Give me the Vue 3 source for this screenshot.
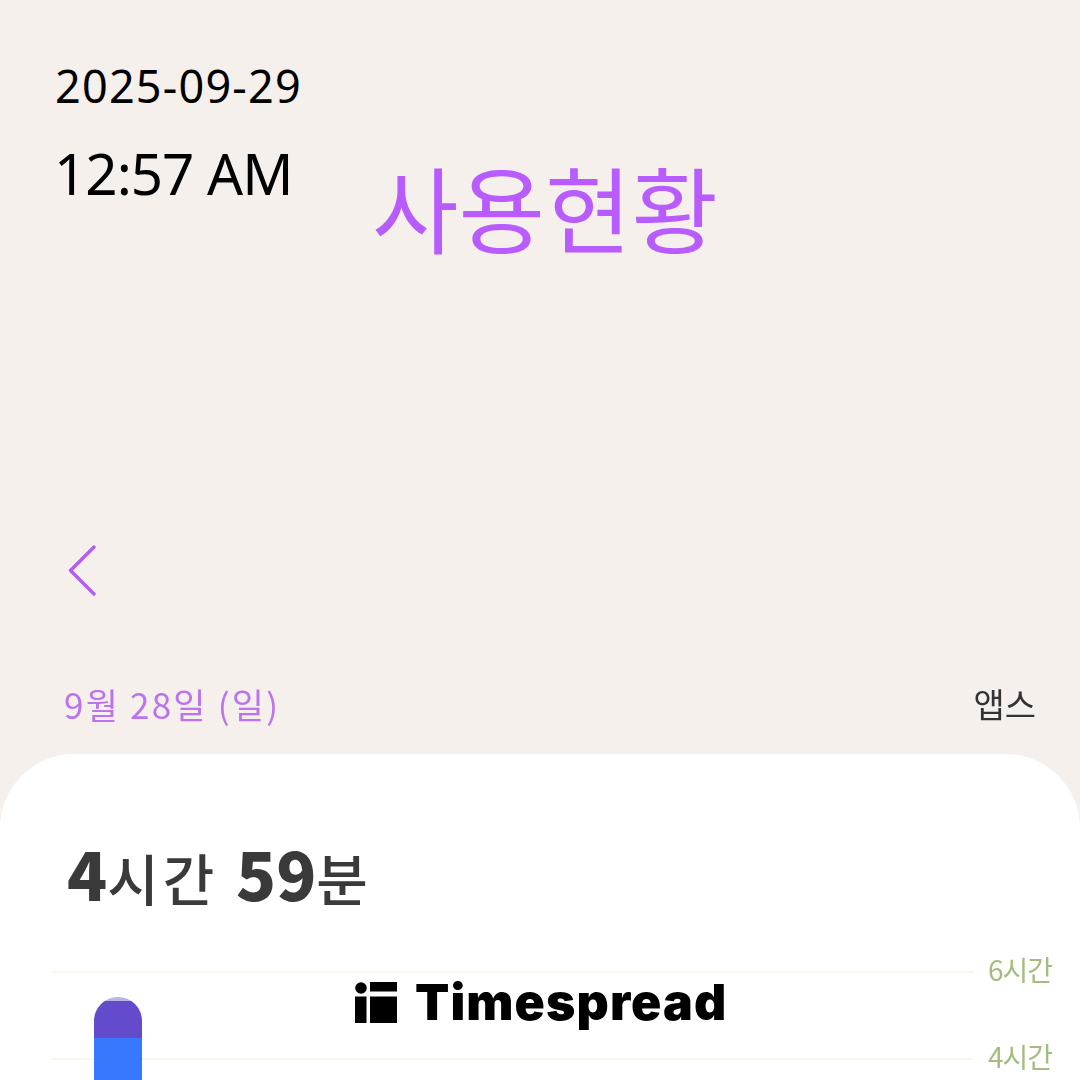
<template>
  <div class="page">
    <header class="clock">
      <div class="clock-date">2025-09-29</div>
      <div class="clock-time">12:57 AM</div>
    </header>

    <h1 class="title">사용현황</h1>

    <button class="back" type="button" aria-label="뒤로">
      <svg width="32" height="52" viewBox="0 0 32 52">
        <path d="M27 2 L3.5 25.5 L27 49" fill="none" stroke="#b25ff0" stroke-width="3.4" stroke-linecap="round" stroke-linejoin="round" />
      </svg>
    </button>

    <div class="range-row">
      <span class="range-date">9월 28일 (일)</span>
      <span class="range-type">앱스</span>
    </div>

    <section class="card">
      <div class="total">
        <b>4</b><span>시간</span> <b>59</b><span>분</span>
      </div>
      <div class="chart">
        <div class="bar">
          <div class="bar-cap"></div>
          <div class="bar-top"></div>
          <div class="bar-main"></div>
        </div>
        <div v-for="label in gridLabels" :key="label" class="grid-row">
          <div class="grid-line"></div>
          <span class="grid-label">{{ label }}</span>
        </div>
      </div>
    </section>

    <div class="brand">
      <svg width="42" height="41" viewBox="0 0 42 41">
        <circle cx="6" cy="6" r="5.8" fill="#000" />
        <rect x="0" y="14.5" width="11.5" height="26.5" fill="#000" />
        <rect x="15" y="0" width="27" height="9.5" fill="#000" />
        <rect x="15" y="14.5" width="27" height="26.5" fill="#000" />
      </svg>
      <span class="brand-name">Timespread</span>
    </div>
  </div>
</template>

<script setup>
const gridLabels = ['6시간', '4시간']
</script>

<style>
html,
body {
  margin: 0;
  background: #f5f0ec;
}
</style>

<style scoped>
.page {
  position: relative;
  width: 1080px;
  height: 1080px;
  overflow: hidden;
  background: #f5f0ec;
  font-family: "Noto Sans CJK KR", "Noto Sans", sans-serif;
}
.clock {
  padding: 56px 0 0 55px;
  height: 100px;
  font-family: "Noto Sans", "Open Sans", sans-serif;
  color: #000;
}
.clock-date {
  font-size: 45px;
  line-height: 60px;
  letter-spacing: 1.2px;
}
.clock-time {
  margin-top: 20px;
  margin-left: -1px;
  font-size: 56.5px;
  line-height: 76px;
  letter-spacing: -1px;
}
.title {
  margin: 0;
  padding-left: 372px;
  font-size: 94px;
  line-height: 100px;
  font-weight: 400;
  color: #b85cff;
}
.back {
  display: block;
  margin: 289px 0 0 67px;
  padding: 0;
  border: 0;
  background: none;
  line-height: 0;
}
.range-row {
  display: flex;
  justify-content: space-between;
  align-items: center;
  margin-top: 86px;
  padding: 0 44px 0 64px;
  height: 40px;
}
.range-date {
  font-size: 35px;
  letter-spacing: 2.2px;
  color: #bb74ee;
  filter: blur(0.4px);
}
.range-type {
  font-size: 34px;
  color: #333;
  filter: blur(0.4px);
}
.card {
  margin-top: 31px;
  height: 400px;
  padding: 88px 28px 0 52px;
  background: #fff;
  border-radius: 74px 74px 0 0;
}
.total {
  height: 60px;
  padding-left: 15px;
  font-size: 56px;
  line-height: 60px;
  font-weight: 700;
  word-spacing: 5px;
  color: #3a3a3a;
  filter: blur(0.4px);
}
.total b {
  font-size: 66px;
}
.total span {
  font-weight: 500;
  letter-spacing: 4px;
}
.chart {
  position: relative;
  margin-top: 26px;
}
.grid-row {
  display: flex;
  align-items: center;
  height: 87px;
  gap: 14px;
}
.grid-line {
  flex: 1;
  height: 2px;
  background: #f7f7ec;
}
.grid-label {
  flex: none;
  width: 64px;
  padding-bottom: 6px;
  font-size: 28px;
  color: #a3bd80;
  letter-spacing: -1px;
  white-space: nowrap;
  filter: blur(0.4px);
}
.bar {
  position: absolute;
  top: 69px;
  left: 42px;
  width: 48px;
  height: 120px;
  overflow: hidden;
  border-radius: 24px 24px 0 0;
}
.bar-cap {
  height: 4px;
  background: #b6b4e2;
}
.bar-top {
  height: 37px;
  background: #644bcb;
}
.bar-main {
  height: 80px;
  background: #3878fe;
}
.brand {
  position: absolute;
  top: 982px;
  left: 355px;
  display: flex;
  align-items: center;
  gap: 18px;
}
.brand-name {
  font-family: Inter, "Noto Sans", sans-serif;
  font-size: 50px;
  line-height: 41px;
  font-weight: 900;
  color: #000;
  letter-spacing: 1.1px;
}
</style>
